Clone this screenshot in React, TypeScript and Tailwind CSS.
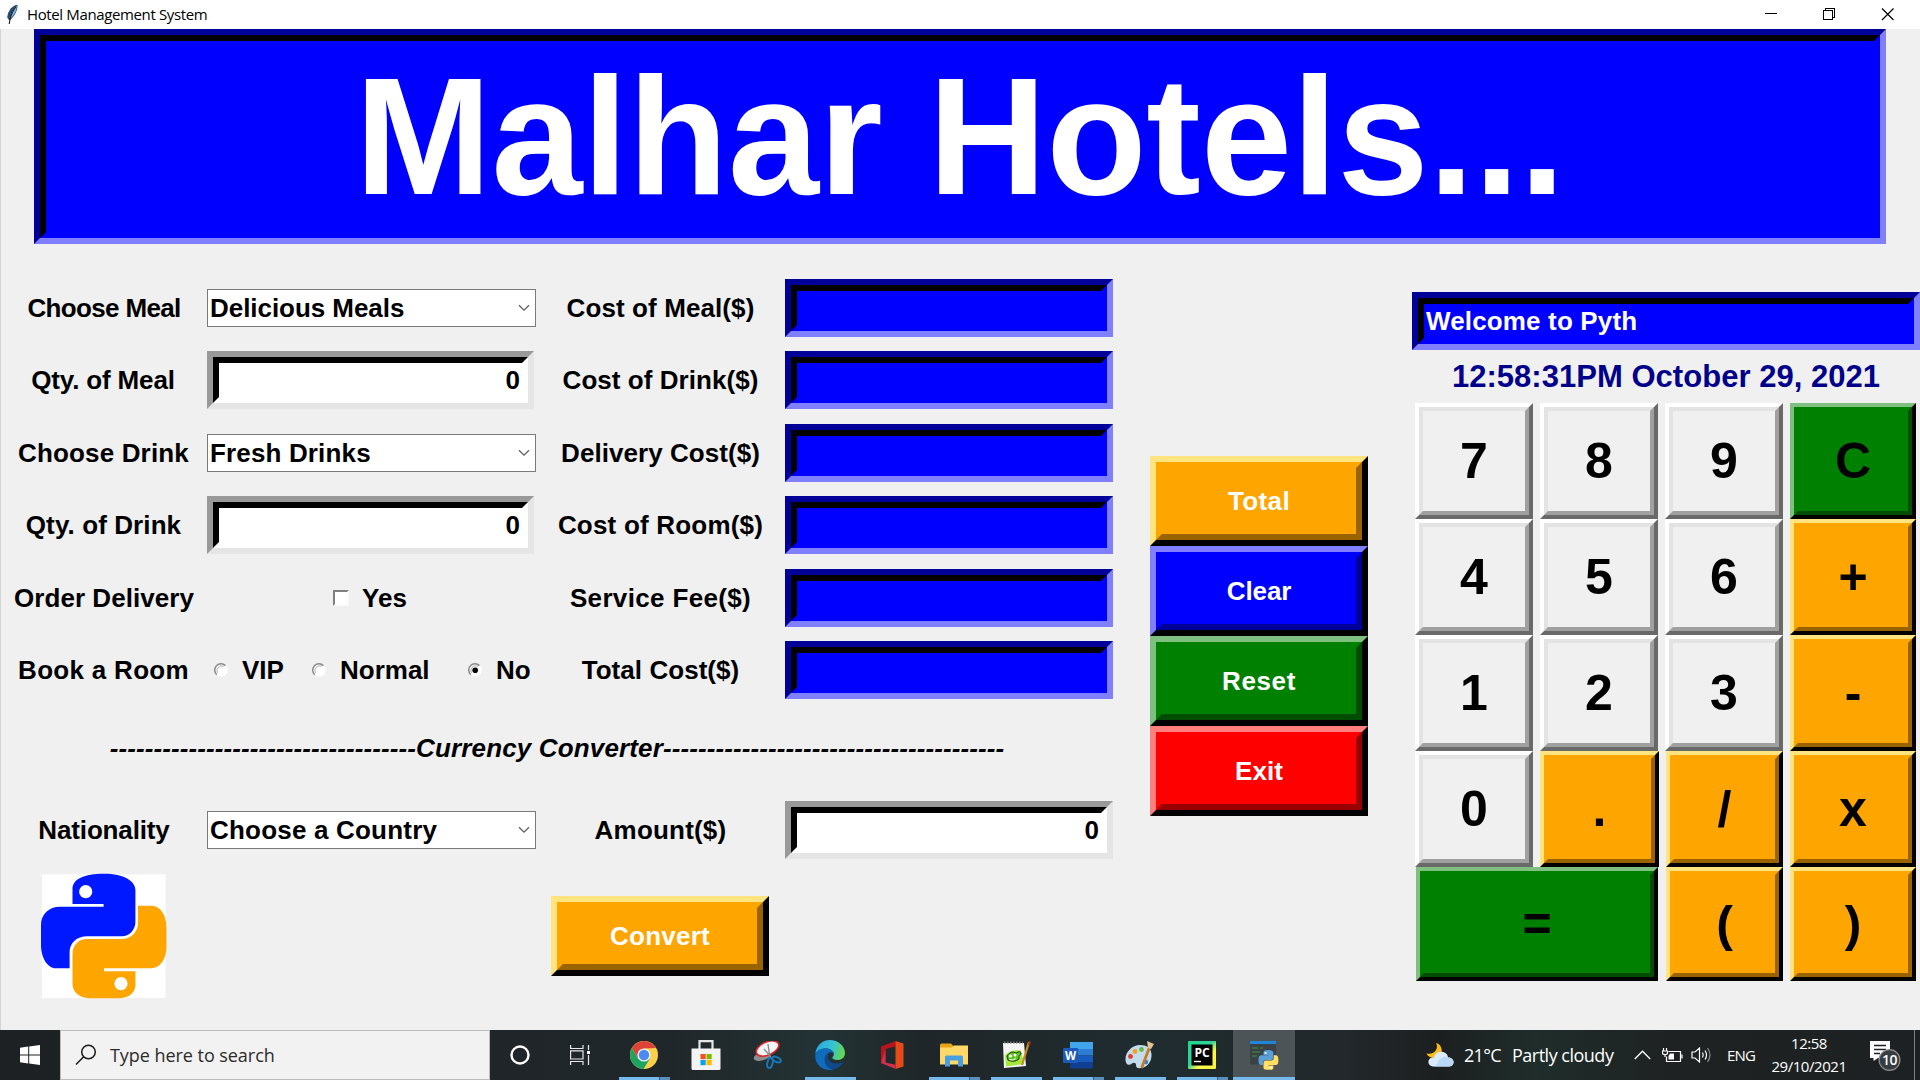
import React from "react";

const ARIAL = "font-['Liberation_Sans',Arial,sans-serif]";
const SEGOE = "font-['Open_Sans','Noto_Sans',sans-serif]";

type Tone = { outer: string; inner: string };

const SUNK_BLUE: Tone = {
  outer: "border-t-[#000099] border-l-[#000099] border-b-[#7f7fff] border-r-[#7f7fff]",
  inner: "border-t-black border-l-black border-b-[#0000ff] border-r-[#0000ff] bg-[#0000ff]",
};
const SUNK_WHITE: Tone = {
  outer: "border-t-[#999999] border-l-[#999999] border-b-[#e5e5e5] border-r-[#e5e5e5]",
  inner: "border-t-black border-l-black border-b-white border-r-white bg-white",
};
const ORANGE: Tone = {
  outer: "border-t-[#ffe47f] border-l-[#ffe47f] border-b-black border-r-black",
  inner: "border-t-[#ffa500] border-l-[#ffa500] border-b-[#996300] border-r-[#996300] bg-[#ffa500]",
};
const BLUE: Tone = {
  outer: "border-t-[#7f7fff] border-l-[#7f7fff] border-b-black border-r-black",
  inner: "border-t-[#0000ff] border-l-[#0000ff] border-b-[#000099] border-r-[#000099] bg-[#0000ff]",
};
const GREEN: Tone = {
  outer: "border-t-[#7fbf7f] border-l-[#7fbf7f] border-b-black border-r-black",
  inner: "border-t-[#008000] border-l-[#008000] border-b-[#004c00] border-r-[#004c00] bg-[#008000]",
};
const RED: Tone = {
  outer: "border-t-[#ff7f7f] border-l-[#ff7f7f] border-b-black border-r-black",
  inner: "border-t-[#ff0000] border-l-[#ff0000] border-b-[#990000] border-r-[#990000] bg-[#ff0000]",
};
const GRAY: Tone = {
  outer: "border-t-white border-l-white border-b-[#696969] border-r-[#696969]",
  inner: "border-t-[#e3e3e3] border-l-[#e3e3e3] border-b-[#a0a0a0] border-r-[#a0a0a0] bg-[#f0f0f0]",
};

function Bevel({
  tone,
  className = "",
  inner = "",
  thin = false,
  children,
}: {
  tone: Tone;
  className?: string;
  inner?: string;
  thin?: boolean;
  children?: React.ReactNode;
}) {
  const width = thin ? "border-4" : "border-[6px]";
  return (
    <div className={`${width} ${tone.outer} ${className}`}>
      <div className={`flex h-full w-full items-center ${width} ${tone.inner} ${inner}`}>{children}</div>
    </div>
  );
}

function Label({ children, className = "" }: { children: React.ReactNode; className?: string }) {
  return (
    <div className={`flex items-center justify-center whitespace-nowrap ${className}`}>
      <span>{children}</span>
    </div>
  );
}

function Select({ value, text = "" }: { value: string; text?: string }) {
  return (
    <div className="flex items-center">
      <div className="flex h-[38px] w-[329px] items-center justify-between border border-[#7a7a7a] bg-white pr-[5px] pl-[2px]">
        <span className={`whitespace-nowrap ${text}`}>{value}</span>
        <svg width="12" height="8" viewBox="0 0 12 8" fill="none" stroke="#606060" strokeWidth="1.3">
          <path d="M1 1.2 6 6.2 11 1.2" />
        </svg>
      </div>
    </div>
  );
}

function Entry({ width }: { width: string }) {
  return (
    <div className="flex items-center">
      <Bevel tone={SUNK_WHITE} className={`h-[58px] ${width}`} inner="justify-end pr-[2px]">
        0
      </Bevel>
    </div>
  );
}

function Cost() {
  return (
    <div className="flex items-center">
      <Bevel tone={SUNK_BLUE} className="h-[58px] w-[328px]" />
    </div>
  );
}

function Radio({ label, on = false, className = "" }: { label: string; on?: boolean; className?: string }) {
  return (
    <div className={`flex items-center gap-[14px] ${className}`}>
      <svg width="14" height="14" viewBox="0 0 14 14">
        <circle cx="7.300" cy="7.300" r="6.300" fill="#fff" />
        <path d="M2.700 11.800A6.200 6.200 0 0 1 11.400 2.600" fill="none" stroke="#8a8a8a" strokeWidth="1.500" />
        <path d="M3.400 9.800A4.900 4.900 0 0 1 9.800 3.200" fill="none" stroke="#8d8d8d" strokeWidth="0.700" />
        {on && <circle cx="7.200" cy="7.200" r="2.800" fill="#000" />}
      </svg>
      <span>{label}</span>
    </div>
  );
}

function PythonLogo() {
  return (
    <svg width="126" height="126" viewBox="0 0 126 126">
      <rect x="1" y="1.5" width="123.5" height="123.5" fill="#fff" />
      <path
        d="M31.5 31V16C31.5 6 43 .7 63 .7S94.4 8 94.4 17V49C94.4 57 88 63.3 81 63.3H46C36 63.3 28.6 70 28.6 79V95.3H15C6 95.3 0 84 0 72V52C0 41 8 33.7 19 33.7H62.6V31Z"
        fill="#0018ff"
      />
      <path
        d="M97 32.7H111C119 32.7 125.4 42 125.4 54V74C125.4 86 119 95.3 110 95.3H63V98.3H94.4V112C94.4 120 87 125.3 78 125.3H49C40 125.3 31.5 120 31.5 111V81C31.5 72 38 66 46 66H81C90 66 97 59 97 50Z"
        fill="#ffa500"
      />
      <circle cx="44.7" cy="18.7" r="6.6" fill="#fff" />
      <circle cx="80" cy="110.7" r="6.6" fill="#fff" />
    </svg>
  );
}

function TitleBar() {
  return (
    <header className={`flex h-[29px] shrink-0 items-center bg-white ${SEGOE}`}>
      <svg className="ml-[5px]" width="14" height="21" viewBox="0 0 14 21">
        <path d="M12.6.8C8 1 3 6 2.2 13.5L4.3 16.5C9 13.5 12.6 7 12.6.8Z" fill="#2c4a6e" />
        <path d="M11.8 1.6C9.6 3 7.2 7 5.2 14.6 9 12 11.6 6.6 11.8 1.6Z" fill="#7db4e6" />
        <path d="M11 2.5C7.5 7 5 12.5 4.2 20" fill="none" stroke="#1b1b1b" strokeWidth="1.1" />
      </svg>
      <span className="ml-2 whitespace-nowrap text-[15px] leading-none tracking-[-0.37px] text-black">
        Hotel Management System
      </span>
      <div className="ml-auto flex items-center">
        <svg width="155" height="29" viewBox="0 0 155 29" fill="none" stroke="#000" strokeWidth="1" shapeRendering="crispEdges">
          <path d="M0 13.5H12M58.5 10.5H67.5V19.5H58.5ZM60.5 10V8.5H69.5V17.5H68" />
          <path d="M117 8.5 128.500 20M128.500 8.500 117 20" shapeRendering="auto" strokeWidth="1.2" />
        </svg>
      </div>
    </header>
  );
}

const KEYS: { k: string; tone: Tone; cls: string }[] = [
  { k: "7", tone: GRAY, cls: "w-[118px]" },
  { k: "8", tone: GRAY, cls: "w-[118px]" },
  { k: "9", tone: GRAY, cls: "w-[118px]" },
  { k: "C", tone: GREEN, cls: "w-[126px]" },
  { k: "4", tone: GRAY, cls: "w-[118px]" },
  { k: "5", tone: GRAY, cls: "w-[118px]" },
  { k: "6", tone: GRAY, cls: "w-[118px]" },
  { k: "+", tone: ORANGE, cls: "w-[126px]" },
  { k: "1", tone: GRAY, cls: "w-[118px]" },
  { k: "2", tone: GRAY, cls: "w-[118px]" },
  { k: "3", tone: GRAY, cls: "w-[118px]" },
  { k: "-", tone: ORANGE, cls: "w-[126px]" },
  { k: "0", tone: GRAY, cls: "w-[118px]" },
  { k: ".", tone: ORANGE, cls: "w-[119px]" },
  { k: "/", tone: ORANGE, cls: "ml-px w-[117px]" },
  { k: "x", tone: ORANGE, cls: "w-[126px]" },
  { k: "=", tone: GREEN, cls: "col-span-2 ml-px w-[242px]" },
  { k: "(", tone: ORANGE, cls: "ml-px w-[117px]" },
  { k: ")", tone: ORANGE, cls: "w-[126px]" },
];

function Calculator() {
  return (
    <section className="mt-[48px] ml-[44px] w-[508px] shrink-0">
      <Bevel tone={SUNK_BLUE} className="h-[58px] w-[508px]" inner="pl-[2px] text-white">
        <span className="whitespace-nowrap tracking-[0.15px]">Welcome to Pyth</span>
      </Bevel>
      <div className="flex h-[53px] items-center justify-center text-[31px] tracking-[0.03px] whitespace-nowrap text-[#00008b]">
        <span>12:58:31PM October 29, 2021</span>
      </div>
      <div className="ml-[3px] grid grid-cols-[125px_125px_125px_126px] grid-rows-[116px_116px_116px_116px_114px] text-[50px]">
        {KEYS.map(({ k, tone, cls }) => (
          <Bevel key={k} tone={tone} thin className={cls} inner="justify-center">
            <span>{k}</span>
          </Bevel>
        ))}
      </div>
    </section>
  );
}

function Actions() {
  const items: [string, Tone, string][] = [
    ["Total", ORANGE, "tracking-[0.35px]"],
    ["Clear", BLUE, "tracking-[-0.1px]"],
    ["Reset", GREEN, "tracking-[0.6px]"],
    ["Exit", RED, "tracking-[0.1px]"],
  ];
  return (
    <section className="mt-[212px] ml-[37px] w-[218px] shrink-0 text-white">
      {items.map(([t, tone, tracking]) => (
        <Bevel key={t} tone={tone} className="h-[90px] w-full" inner="justify-center">
          <span className={tracking}>{t}</span>
        </Bevel>
      ))}
    </section>
  );
}

function Form() {
  return (
    <section className="mt-[27.5px] grid w-[1112px] shrink-0 grid-cols-[206px_329px_249px_328px] grid-rows-[repeat(6,72.5px)_87px_72.5px_139px]">
      <Label className="tracking-[-0.65px]">Choose Meal</Label>
      <Select value="Delicious Meals" text="tracking-[-0.05px]" />
      <Label className="tracking-[0.1px]">Cost of Meal($)</Label>
      <Cost />

      <Label className="pr-[2px] tracking-[-0.15px]">Qty. of Meal</Label>
      <Entry width="w-[327px]" />
      <Label className="tracking-[0.05px]">Cost of Drink($)</Label>
      <Cost />

      <Label className="pr-px tracking-[0.15px]">Choose Drink</Label>
      <Select value="Fresh Drinks" text="tracking-[0.15px]" />
      <Label className="tracking-[0.05px]">Delivery Cost($)</Label>
      <Cost />

      <Label className="pr-px tracking-[0.1px]">Qty. of Drink</Label>
      <Entry width="w-[327px]" />
      <Label className="tracking-[0.2px]">Cost of Room($)</Label>
      <Cost />

      <Label className="tracking-[0.05px]">Order Delivery</Label>
      <div className="flex items-center justify-center gap-[13px] pr-[3px]">
        <span className="h-[16px] w-[16px] border-2 border-t-[#808080] border-r-[#fafafa] border-b-[#fafafa] border-l-[#808080] bg-white" />
        <span>Yes</span>
      </div>
      <Label className="tracking-[0.35px]">Service Fee($)</Label>
      <Cost />

      <Label className="pr-px tracking-[0.3px]">Book a Room</Label>
      <div className="flex items-center pl-[7px]">
        <Radio label="VIP" className="w-[98px]" />
        <Radio label="Normal" className="w-[156px]" />
        <Radio label="No" on />
      </div>
      <Label className="tracking-[0.05px]">Total Cost($)</Label>
      <Cost />

      <Label className="col-span-4 pb-[5px] italic">
        <span className="tracking-[0.09px]">-----------------------------------</span>
        <span className="tracking-[0.15px]">Currency Converter</span>
        <span className="tracking-[0.09px]">---------------------------------------</span>
      </Label>

      <Label className="tracking-[-0.15px]">Nationality</Label>
      <Select value="Choose a Country" text="tracking-[0.2px]" />
      <Label className="tracking-[0.2px]">Amount($)</Label>
      <Entry width="w-[328px]" />

      <div className="flex items-center justify-center pt-px">
        <PythonLogo />
      </div>
      <div />
      <div className="flex items-center justify-center pt-px pr-px text-white">
        <Bevel tone={ORANGE} className="h-[80px] w-[218px]" inner="justify-center">
          <span className="tracking-[0.25px]">Convert</span>
        </Bevel>
      </div>
      <div />
    </section>
  );
}

type TaskApp = { icon: React.ReactNode; bar?: "one" | "many"; active?: boolean };

const APPS: TaskApp[] = [
  {
    bar: "many",
    icon: (
      <svg width="28" height="28" viewBox="0 0 28 28">
        <circle cx="14" cy="14" r="14" fill="#fcd04b" />
        <path d="M1.900 7A14 14 0 0 1 26.100 7L14 7.600 8 17.500Z" fill="#db4437" />
        <path d="M1.900 7A14 14 0 0 0 13.500 28L20 17.500 8 17.500Z" fill="#1da362" />
        <circle cx="14" cy="14" r="6.600" fill="#f1f1f1" />
        <circle cx="14" cy="14" r="5.200" fill="#4a8af4" />
      </svg>
    ),
  },
  {
    icon: (
      <svg width="30" height="30" viewBox="0 0 30 30">
        <path d="M8.500 9V1.200H21.500V9" fill="none" stroke="#e6e6e6" strokeWidth="2.200" />
        <path d="M.5 8.500H29.500V28.500Q29.500 30 28 30H2Q.5 30 .5 28.500Z" fill="#f3f3f3" />
        <path d="M9.500 14h5.200v5.200h-5.200z" fill="#f25022" />
        <path d="M15.500 14h5.200v5.200h-5.200z" fill="#7fba00" />
        <path d="M9.500 20h5.200v5.200h-5.200z" fill="#00a4ef" />
        <path d="M15.500 20h5.200v5.200h-5.200z" fill="#ffb900" />
      </svg>
    ),
  },
  {
    icon: (
      <svg width="30" height="28" viewBox="0 0 30 28">
        <ellipse cx="9" cy="15.500" rx="8.500" ry="4" fill="#8d8d90" transform="rotate(-15 9 15.500)" />
        <ellipse cx="14.500" cy="7.500" rx="12" ry="6.500" fill="#f4f4f4" stroke="#d8262c" strokeWidth="1.600" transform="rotate(-24 14.500 7.500)" />
        <path d="M15 3 17 17M11 8 18 16" stroke="#8a8f94" strokeWidth="1.400" />
        <ellipse cx="17" cy="22" rx="2.600" ry="5" fill="none" stroke="#1877b8" strokeWidth="2" transform="rotate(15 17 22)" />
        <ellipse cx="23.500" cy="18.500" rx="4.600" ry="2.400" fill="none" stroke="#1877b8" strokeWidth="2" transform="rotate(24 23.500 18.500)" />
      </svg>
    ),
  },
  {
    bar: "one",
    icon: (
      <svg width="30" height="30" viewBox="0 0 30 30">
        <defs>
          <linearGradient id="edgeTop" x1="0" y1="0.300" x2="1" y2="0.500">
            <stop offset="0" stopColor="#2aa9e0" />
            <stop offset="0.550" stopColor="#35c1d6" />
            <stop offset="1" stopColor="#66d84b" />
          </linearGradient>
        </defs>
        <path d="M.3 14C1 6 7 0 15 0S30 6 30 13C30 17.500 26.500 20 22.500 20 19 20 17.300 18.800 17.300 17.700 17.300 16.800 18.800 16.400 18.800 14 18.800 11 15.500 8.500 11 8.500 5.500 8.500 1.500 11 .3 14Z" fill="url(#edgeTop)" />
        <path d="M.2 16C.2 11 5 8.500 11 8.500 15.500 8.500 18.800 11 18.800 14 18.800 12 13 11 10.500 16 8 22 12 29 19 29.300 17.800 29.800 16.500 30 15 30 6.500 30 .2 24 .2 16Z" fill="#0f6cbd" />
        <path d="M10.500 16C8 22 12 29.500 19 29.300 23 28.500 26 26 27.800 22.800 28 22.200 27.600 22 27.200 22.300 21 25.500 13 22.500 12.800 17 12.800 15 13.500 13.500 14 12.800 12.500 13 11.300 14.200 10.500 16Z" fill="#114a8b" />
      </svg>
    ),
  },
  {
    icon: (
      <svg width="24" height="28" viewBox="0 0 24 28">
        <path d="M15.500 0 1 5.500V22L5.500 20V8L15.500 5.500Z" fill="#b8141c" />
        <path d="M15.500 0 23.500 2.500V25.500L15.500 28Z" fill="#e64a19" />
        <path d="M1 22 15.500 28V23.800L5.500 21.500V8L1 22Z" fill="#d0304e" />
      </svg>
    ),
  },
  {
    bar: "many",
    icon: (
      <svg width="28" height="24" viewBox="0 0 28 24">
        <path d="M0 2Q0 .5 1.500 .5H11L14 3.500V8H0Z" fill="#e8a317" />
        <path d="M0 4.500H12L14 2.500H28V21.500H0Z" fill="#ffd867" />
        <path d="M5 23.500V14Q5 12.500 6.500 12.500H21.500Q23 12.500 23 14V23.500H18V17.500H10V23.500Z" fill="#4a9fe0" />
      </svg>
    ),
  },
  {
    bar: "one",
    icon: (
      <svg width="29" height="28" viewBox="0 0 29 28">
        <path d="M1 2H22L24 25 2 27Z" fill="#f4f4f4" />
        <path d="M2 1.500H21" stroke="#777" strokeWidth="2" strokeDasharray="1.500 1.500" />
        <path d="M3 14Q9 8 19 9.500L22 23 4 25.500Z" fill="#a4e63c" />
        <path d="M5 15Q9 9 14 12 19 9 19 13 16 15 17 18 12 22 6 19Z" fill="#5cc320" stroke="#1d3a12" strokeWidth="1" />
        <circle cx="8.500" cy="15" r="1.500" fill="#fff" />
        <circle cx="13" cy="14" r="1.500" fill="#fff" />
        <path d="M7 18.500Q11 20 14 17.500" fill="none" stroke="#fff" strokeWidth="1" />
        <path d="M27 1 20 24" stroke="#c78a24" strokeWidth="2.200" />
        <path d="M28 .5 27 4" stroke="#a5341f" strokeWidth="2.200" />
      </svg>
    ),
  },
  {
    bar: "many",
    icon: (
      <svg width="30" height="27" viewBox="0 0 30 27">
        <path d="M7 0H30V7H7Z" fill="#41a5ee" />
        <path d="M7 7H30V13.500H7Z" fill="#2b7cd3" />
        <path d="M7 13.500H30V20H7Z" fill="#185abd" />
        <path d="M7 20H30V25.500Q30 26.500 29 26.500H8Q7 26.500 7 25.500Z" fill="#103f91" />
        <rect x="0" y="6" width="15" height="15" rx="1" fill="#1d59b8" />
        <text x="7.500" y="17.800" fontSize="11.500" fontWeight="700" fill="#fff" textAnchor="middle" fontFamily="Open Sans, sans-serif">
          W
        </text>
      </svg>
    ),
  },
  {
    bar: "one",
    icon: (
      <svg width="30" height="28" viewBox="0 0 30 28">
        <path d="M15 4C7 4 .5 11 .5 18 .5 24 4 25 7 22.500 9 21 11 22 11 24 11 27 13 27.500 16 27 23 26 27 20 26.500 13 26 7 22 4 15 4Z" fill="#c3dcec" />
        <circle cx="5.500" cy="15.500" r="2.400" fill="#e03c31" />
        <circle cx="10" cy="10.500" r="2.400" fill="#f4a11c" />
        <circle cx="16.500" cy="8.500" r="2.400" fill="#62b946" />
        <circle cx="21" cy="21" r="2.200" fill="#3a7fc4" />
        <path d="M25 5 17 26" stroke="#c6792a" strokeWidth="2.800" strokeLinecap="round" />
        <path d="M22 0 29 3 26 8 23 7Z" fill="#e6c295" />
      </svg>
    ),
  },
  {
    bar: "many",
    icon: (
      <svg width="28" height="28" viewBox="0 0 28 28">
        <defs>
          <linearGradient id="pc" x1="0" y1="0" x2="1" y2="1">
            <stop offset="0" stopColor="#21d789" />
            <stop offset="0.450" stopColor="#2fd39b" />
            <stop offset="0.650" stopColor="#fcf84a" />
            <stop offset="1" stopColor="#f5f13d" />
          </linearGradient>
        </defs>
        <rect width="28" height="28" rx="1" fill="url(#pc)" />
        <rect x="3.500" y="3.500" width="21" height="21" fill="#000" />
        <text x="14" y="15.500" fontSize="12" fontWeight="700" fill="#fff" textAnchor="middle" fontFamily="Open Sans, sans-serif">
          PC
        </text>
        <path d="M6 20.500H13" stroke="#fff" strokeWidth="1.400" />
      </svg>
    ),
  },
  {
    bar: "one",
    active: true,
    icon: (
      <svg width="29" height="29" viewBox="0 0 29 29">
        <rect width="26" height="23" y="0.500" fill="#3a4246" />
        <rect width="26" height="3" fill="#1e86d8" />
        <path d="M2 7H8M2 11H10M10 7H13M2 15H7" stroke="#3c7a42" strokeWidth="1.400" />
        <g transform="translate(8.500 9) scale(0.158)">
          <path d="M31.500 31V16C31.500 6 43 .7 63 .7S94.400 8 94.400 17V49C94.400 57 88 63.300 81 63.300H46C36 63.300 28.600 70 28.600 79V95.300H15C6 95.300 0 84 0 72V52C0 41 8 33.700 19 33.700H62.600V31Z" fill="#5a9fd8" />
          <path d="M97 32.700H111C119 32.700 125.400 42 125.400 54V74C125.400 86 119 95.300 110 95.300H63V98.300H94.400V112C94.400 120 87 125.300 78 125.300H49C40 125.300 31.500 120 31.500 111V81C31.500 72 38 66 46 66H81C90 66 97 59 97 50Z" fill="#ffe063" />
          <circle cx="44.700" cy="18.700" r="6.600" fill="#fff" />
          <circle cx="80" cy="110.700" r="6.600" fill="#fff" />
        </g>
      </svg>
    ),
  },
];

function TaskItem({ icon, bar, active }: TaskApp) {
  return (
    <div
      className={`flex h-[50px] w-[62px] flex-col items-center ${active ? "bg-[#4c5457]" : ""}`}
    >
      <div className="flex h-[47px] w-full items-center justify-center pt-[3px]">{icon}</div>
      {bar && (
        <div className={`flex h-[3px] ${active ? "w-full" : "w-[51px]"}`}>
          <div className="flex-1 bg-[#76b9ed]" />
          {bar === "many" && <div className="w-[11px] border-l border-[#3a5f7d] bg-[#5a8fbb]" />}
        </div>
      )}
    </div>
  );
}

function Taskbar() {
  return (
    <footer className={`flex h-[50px] shrink-0 items-center bg-[linear-gradient(90deg,#1d2124_0%,#20272a_35%,#233335_43%,#1f2629_48%,#1f2c2f_60%,#22282b_70%,#1c1f20_75%,#1f2d2b_80%,#1e2222_87%,#1d2123_100%)] text-white ${SEGOE}`}>
      <div className="flex h-full w-[60px] items-center justify-center">
        <svg width="20" height="20" viewBox="0 0 20 20" fill="#fff">
          <path d="M0 2.700 8.200 1.500V9.500H0ZM9.200 1.400 20 0V9.500H9.200ZM0 10.500H8.200V18.500L0 17.300ZM9.200 10.500H20V20L9.200 18.600Z" />
        </svg>
      </div>
      <div className="flex h-full w-[430px] items-center border border-[#bcbcbc] bg-[#f2f2f2] text-[#2b2b2b]">
        <svg className="ml-[14px]" width="22" height="22" viewBox="0 0 22 22" fill="none" stroke="#1a1a1a" strokeWidth="1.500">
          <circle cx="13.500" cy="8" r="6.800" />
          <path d="M8.700 12.800 1 20.500" />
        </svg>
        <span className="ml-[13px] text-[18px] whitespace-nowrap tracking-[-0.05px]">Type here to search</span>
      </div>
      <div className="flex h-full w-[60px] items-center justify-center">
        <svg width="20" height="20" viewBox="0 0 20 20" fill="none" stroke="#fff" strokeWidth="2.400">
          <circle cx="10" cy="10" r="8.500" />
        </svg>
      </div>
      <div className="flex h-full w-[63px] items-center justify-center pr-[3px]">
        <svg width="20" height="20" viewBox="0 0 20 20" fill="none" stroke="#e8e8e8" strokeWidth="1.200">
          <path d="M.6 0V3.500H13V0M.6 20V16.500H13V20M.6 5.800H13V14H.6ZM18.500 0V5M18.500 10V20" />
          <path d="M17 6H20V9H17Z" fill="#fff" stroke="none" />
        </svg>
      </div>
      {APPS.map((a, i) => (
        <TaskItem key={i} {...a} />
      ))}
      <div className="ml-auto flex h-full items-center">
        <svg width="28" height="26" viewBox="0 0 28 26">
          <path d="M10 1C13 6 9 13 .5 11.500 3 17 11 17.500 15 12 17 8 15 2 10 1Z" fill="#fbbc1a" />
          <path d="M8 24.500C4 24.500 2 22 2.500 19 3 16 6 15 8 15.500 9 11 13 9 17 10 20 10.500 22 13 22 15.500 26 15.500 28 18 27.500 21 27 23.500 25 24.500 23 24.500Z" fill="#dcebfa" />
          <path d="M12 20C14 15 20 14 22 15.500 26 15.500 28 18 27.500 21 27 23.500 25 24.500 23 24.500H8C10 24 11 22.500 12 20Z" fill="#b9d8f5" />
        </svg>
        <span className="ml-[10px] w-[48px] text-[18px] whitespace-nowrap tracking-[-0.7px]">21°C</span>
        <span className="w-[103px] text-[18px] whitespace-nowrap tracking-[-0.5px]">Partly cloudy</span>
        <svg className="ml-[19px]" width="17" height="10" viewBox="0 0 17 10" fill="none" stroke="#fff" strokeWidth="1.300">
          <path d="M.8 9 8.500 1.200 16.200 9" />
        </svg>
        <svg className="ml-[11px]" width="21" height="15" viewBox="0 0 21 15" fill="none" stroke="#fff" strokeWidth="1.200">
          <path d="M6.500 3.500H18.500V13.500H4.500V8.500M20 6.500V10.500" />
          <path d="M8 5.500H12V11.500H6.500V8Z" fill="#fff" stroke="none" />
          <path d="M1.500 0V2.500M4.500 0V2.500M.5 3H5.500V5Q5.500 6.500 3 6.500T.5 5ZM3 6.500V9" />
        </svg>
        <svg className="ml-[8px]" width="22" height="18" viewBox="0 0 22 18" fill="none" stroke="#fff" strokeWidth="1.200">
          <path d="M1 6H4L8.500 2V16L4 12H1ZM11.500 6.500Q13 9 11.500 11.500M14 4.500Q17 9 14 13.500" />
          <path d="M16.500 2Q21.500 9 16.500 16" stroke="#8a8f91" />
        </svg>
        <span className="ml-[14px] w-[31px] text-[15px] tracking-[-0.8px]">ENG</span>
        <div className="ml-[13px] w-[76px] text-center text-[15px] leading-[23px] whitespace-nowrap tracking-[-0.45px]">
          <div>12:58</div>
          <div>29/10/2021</div>
        </div>
        <svg className="ml-[22px]" width="32" height="32" viewBox="0 0 32 32">
          <path d="M1 2H21V19H9L4.500 22V19H1Z" fill="#fff" />
          <path d="M5 6.500H17M5 10.500H17M5 14.500H11" stroke="#1d2123" strokeWidth="1.300" />
          <circle cx="20.500" cy="21" r="10.400" fill="#383d3f" stroke="#8b8f91" strokeWidth="1.200" />
          <text x="20.500" y="26" fontSize="14" fontWeight="600" fill="#fff" textAnchor="middle" fontFamily="Open Sans, sans-serif" letterSpacing="-0.600">
            10
          </text>
        </svg>
        <div className="ml-[13px] h-full w-px bg-[#7c8082]" />
        <div className="w-[5px]" />
      </div>
    </footer>
  );
}

export default function App() {
  return (
    <div className="flex h-[1080px] w-[1920px] flex-col overflow-hidden bg-[#f0f0f0]">
      <TitleBar />
      <main className={`flex flex-1 flex-col border-l border-[#d4d4d4] text-[26px] leading-none font-bold text-black ${ARIAL}`}>
        <Bevel tone={SUNK_BLUE} className="ml-[33px] h-[215px] w-[1852px]" inner="justify-center text-white">
          <span className="origin-center scale-y-[1.02] text-[163.7px] whitespace-nowrap">Malhar Hotels...</span>
        </Bevel>
        <div className="flex">
          <Form />
          <Actions />
          <Calculator />
        </div>
      </main>
      <Taskbar />
    </div>
  );
}
